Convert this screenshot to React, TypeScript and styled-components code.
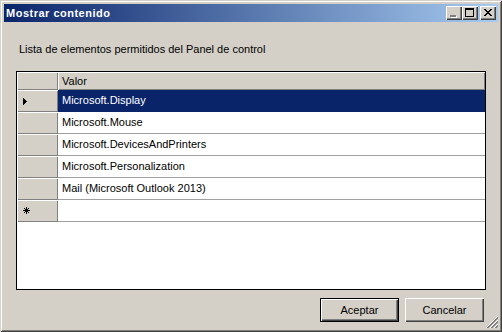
import React from "react";
import styled, { createGlobalStyle } from "styled-components";

const Global = createGlobalStyle`
  html, body { margin: 0; padding: 0; background: #d4d0c8; }
  * { box-sizing: border-box; }
`;

const Window = styled.div`
  position: relative;
  width: 502px;
  height: 332px;
  background: #d4d0c8;
  padding: 4px;
  display: flex;
  flex-direction: column;
  box-shadow: inset 1px 1px #d4d0c8, inset -1px -1px #404040,
    inset 2px 2px #ffffff, inset -2px -2px #808080;
  font-family: "Liberation Sans", Arial, sans-serif;
  font-size: 11px;
  color: #000;
`;

const TitleBar = styled.div`
  height: 18px;
  flex: none;
  display: flex;
  align-items: center;
  padding: 0 2px 0 2px;
  background: linear-gradient(to right, #0a246a, #a6caf0);
`;

const Title = styled.div`
  flex: 1;
  color: #fff;
  font-weight: bold;
  font-size: 11px;
  letter-spacing: 0.5px;
  line-height: 18px;
`;

const CaptionButtons = styled.div`
  display: flex;
  align-items: center;
`;

const CaptionButton = styled.div<{ $gap?: boolean }>`
  width: 16px;
  height: 14px;
  margin-left: ${(p) => (p.$gap ? "2px" : "0")};
  background: #d4d0c8;
  box-shadow: inset 1px 1px #ffffff, inset -1px -1px #404040,
    inset -2px -2px #808080;
  position: relative;
  svg { position: absolute; left: 0; top: 0; }
`;

const Body = styled.div`
  flex: 1;
  display: flex;
  flex-direction: column;
  padding: 0 12px;
`;

const Label = styled.div`
  margin-top: 21px;
  padding-left: 3px;
  height: 13px;
  line-height: 13px;
  white-space: nowrap;
`;

const Grid = styled.div`
  margin-top: 15px;
  width: 470px;
  height: 219px;
  border: 1px solid #000;
  background: #fff;
  display: grid;
  grid-template-columns: 41px 1fr;
  grid-template-rows: 18px;
  grid-auto-rows: 22px;
  align-content: start;
`;

const HeaderCell = styled.div`
  background: #d4d0c8;
  box-shadow: inset 1px 1px #ffffff, inset -1px -1px #808080;
  padding-left: 4px;
  line-height: 18px;
`;

const RowHeader = styled.div`
  background: #d4d0c8;
  box-shadow: inset 1px 1px #ffffff, inset -1px -1px #808080;
  display: flex;
  align-items: center;
  padding-left: 6px;
`;

const DataCell = styled.div<{ $selected?: boolean }>`
  background: ${(p) => (p.$selected ? "#0a246a" : "#ffffff")};
  color: ${(p) => (p.$selected ? "#ffffff" : "#000000")};
  border-bottom: 1px solid ${(p) => (p.$selected ? "#0a246a" : "#a0a0a0")};
  padding-left: 4px;
  line-height: 21px;
  white-space: nowrap;
`;

const ButtonRow = styled.div`
  margin-top: 8px;
  display: flex;
  justify-content: flex-end;
  gap: 6px;
  padding-right: 2px;
`;

const Button = styled.button<{ $default?: boolean }>`
  width: 79px;
  height: 24px;
  font-family: "Liberation Sans", Arial, sans-serif;
  font-size: 11px;
  color: #000;
  background: #d4d0c8;
  border: ${(p) => (p.$default ? "1px solid #000" : "none")};
  padding: 0;
  box-shadow: inset 1px 1px #ffffff, inset -1px -1px #404040,
    inset -2px -2px #808080;
`;

const Grip = styled.svg`
  position: absolute;
  right: 4px;
  bottom: 4px;
`;

const rows = [
  "Microsoft.Display",
  "Microsoft.Mouse",
  "Microsoft.DevicesAndPrinters",
  "Microsoft.Personalization",
  "Mail (Microsoft Outlook 2013)",
];

const xRows: number[][] = [
  [0, 6],
  [1, 5],
  [2, 4],
  [3, 3],
  [2, 4],
  [1, 5],
  [0, 6],
];

const CloseGlyph = () => (
  <svg width="16" height="14" shapeRendering="crispEdges">
    {xRows.map(([a, b], r) => (
      <g key={r}>
        <rect x={4 + a} y={3 + r} width={2} height={1} fill="#000" />
        <rect x={4 + b} y={3 + r} width={2} height={1} fill="#000" />
      </g>
    ))}
  </svg>
);

const MaxGlyph = () => (
  <svg width="16" height="14" shapeRendering="crispEdges">
    <rect x="3" y="2" width="9" height="2" fill="#000" />
    <rect x="3" y="4" width="1" height="7" fill="#000" />
    <rect x="11" y="4" width="1" height="7" fill="#000" />
    <rect x="3" y="10" width="9" height="1" fill="#000" />
  </svg>
);

const MinGlyph = () => (
  <svg width="16" height="14" shapeRendering="crispEdges">
    <rect x="5" y="10" width="6" height="2" fill="#ffffff" />
    <rect x="4" y="9" width="6" height="2" fill="#808080" />
  </svg>
);

const Arrow = () => (
  <svg width="5" height="7" shapeRendering="crispEdges">
    <rect x="0" y="0" width="1" height="7" fill="#000" />
    <rect x="1" y="1" width="1" height="5" fill="#000" />
    <rect x="2" y="2" width="1" height="3" fill="#000" />
    <rect x="3" y="3" width="1" height="1" fill="#000" />
  </svg>
);

const Star = () => (
  <svg width="8" height="8" shapeRendering="crispEdges">
    <rect x="3" y="0" width="1" height="7" fill="#000" />
    <rect x="0" y="3" width="7" height="1" fill="#000" />
    <rect x="1" y="1" width="1" height="1" fill="#000" />
    <rect x="2" y="2" width="1" height="1" fill="#000" />
    <rect x="4" y="4" width="1" height="1" fill="#000" />
    <rect x="5" y="5" width="1" height="1" fill="#000" />
    <rect x="5" y="1" width="1" height="1" fill="#000" />
    <rect x="4" y="2" width="1" height="1" fill="#000" />
    <rect x="2" y="4" width="1" height="1" fill="#000" />
    <rect x="1" y="5" width="1" height="1" fill="#000" />
  </svg>
);

export default function App() {
  return (
    <>
      <Global />
      <Window>
        <TitleBar>
          <Title>Mostrar contenido</Title>
          <CaptionButtons>
            <CaptionButton>
              <MinGlyph />
            </CaptionButton>
            <CaptionButton>
              <MaxGlyph />
            </CaptionButton>
            <CaptionButton $gap>
              <CloseGlyph />
            </CaptionButton>
          </CaptionButtons>
        </TitleBar>
        <Body>
          <Label>Lista de elementos permitidos del Panel de control</Label>
          <Grid>
            <HeaderCell />
            <HeaderCell>Valor</HeaderCell>
            {rows.map((r, i) => (
              <React.Fragment key={r}>
                <RowHeader>{i === 0 && <Arrow />}</RowHeader>
                <DataCell $selected={i === 0}>{r}</DataCell>
              </React.Fragment>
            ))}
            <RowHeader>
              <Star />
            </RowHeader>
            <DataCell />
          </Grid>
          <ButtonRow>
            <Button $default>Aceptar</Button>
            <Button>Cancelar</Button>
          </ButtonRow>
        </Body>
        <Grip width="12" height="12" shapeRendering="crispEdges">
          {[0, 4, 8].map((o) =>
            Array.from({ length: 12 - o }).map((_, k) => (
              <g key={`${o}-${k}`}>
                <rect x={o + k} y={11 - k} width="1" height="1" fill="#ffffff" />
                <rect x={o + k + 1} y={11 - k} width="2" height="1" fill="#808080" />
              </g>
            ))
          )}
        </Grip>
      </Window>
    </>
  );
}
